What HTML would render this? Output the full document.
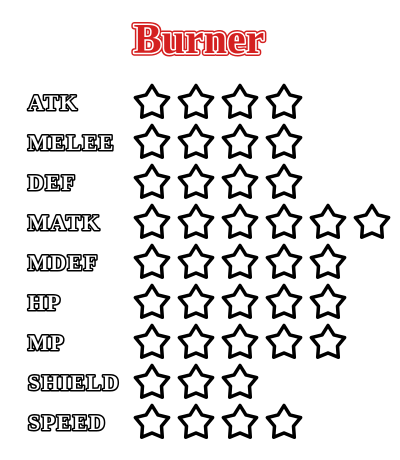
<!DOCTYPE html>
<html><head><style>html,body{margin:0;padding:0;background:#fff;width:400px;height:460px;overflow:hidden}</style></head>
<body>
<svg width="400" height="460" xmlns="http://www.w3.org/2000/svg" xmlns:xlink="http://www.w3.org/1999/xlink">
<defs>
<path id="s" d="M0,-17.5 L5.9,-8.1 L16.6,-5.4 L9.5,3.1 L10.3,14.2 L0,10 L-10.3,14.2 L-9.5,3.1 L-16.6,-5.4 L-5.9,-8.1 Z" fill="#fff" stroke="#000" stroke-width="3.5" stroke-linejoin="round"/>
<g id="r3"><use xlink:href="#s" x="152"/><use xlink:href="#s" x="196"/><use xlink:href="#s" x="240"/></g>
<g id="r4"><use xlink:href="#r3"/><use xlink:href="#s" x="284"/></g>
<g id="r5"><use xlink:href="#r4"/><use xlink:href="#s" x="328"/></g>
<g id="r6"><use xlink:href="#r5"/><use xlink:href="#s" x="372"/></g>
</defs>
<g font-family="Liberation Serif, serif" font-weight="bold">
<text x="199" y="53" text-anchor="middle" font-size="42" fill="#d42020" stroke="#d42020" stroke-width="6" stroke-linejoin="round">Burner</text>
<text x="199" y="53" text-anchor="middle" font-size="42" fill="#d42020" stroke="#fff" stroke-width="3" stroke-linejoin="round" paint-order="stroke">Burner</text>
<g font-size="22" letter-spacing="1.5" fill="#fff" stroke="#000" stroke-width="3" stroke-linejoin="round" paint-order="stroke">
<text x="28" y="110">ATK</text>
<text x="28" y="150">MELEE</text>
<text x="28" y="190">DEF</text>
<text x="28" y="230">MATK</text>
<text x="28" y="270">MDEF</text>
<text x="28" y="310">HP</text>
<text x="28" y="350">MP</text>
<text x="28" y="390">SHIELD</text>
<text x="28" y="430">SPEED</text>
</g>
</g>
<use xlink:href="#r4" y="103"/>
<use xlink:href="#r4" y="143"/>
<use xlink:href="#r4" y="183"/>
<use xlink:href="#r6" y="223"/>
<use xlink:href="#r5" y="263"/>
<use xlink:href="#r5" y="303"/>
<use xlink:href="#r5" y="343"/>
<use xlink:href="#r3" y="383"/>
<use xlink:href="#r4" y="423"/>
</svg>
</body></html>
